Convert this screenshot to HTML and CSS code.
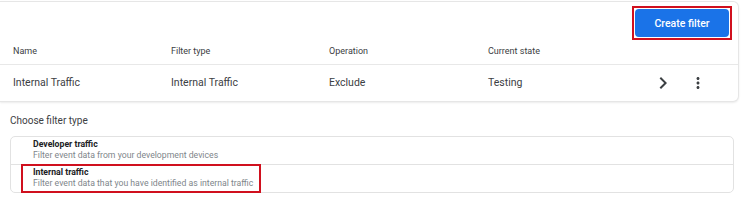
FILE: index.html
```html
<!DOCTYPE html>
<html lang="en">
  <head>
    <meta charset="UTF-8" />
    <meta name="viewport" content="width=device-width, initial-scale=1.0" />
    <title>Data filters</title>
    <link rel="stylesheet" href="styles.css">
  </head>
  <body>
    <div class="filters-card">
      <div class="toolbar">
        <span class="callout">
          <button class="create-btn">Create filter</button>
        </span>
      </div>

      <div class="table-row table-head">
        <div>Name</div>
        <div>Filter type</div>
        <div>Operation</div>
        <div>Current state</div>
      </div>

      <div class="table-row">
        <div>Internal Traffic</div>
        <div>Internal Traffic</div>
        <div>Exclude</div>
        <div>Testing</div>
        <div class="actions">
          <svg class="icon-chevron" viewBox="0 0 24 24" width="24" height="24">
            <path d="M10 6L8.59 7.41 13.17 12l-4.58 4.59L10 18l6-6z" />
          </svg>
          <svg class="icon-more" viewBox="0 0 24 24" width="18" height="18">
            <path d="M12 8c1.1 0 2-.9 2-2s-.9-2-2-2-2 .9-2 2 .9 2 2 2zm0 2c-1.1 0-2 .9-2 2s.9 2 2 2 2-.9 2-2-.9-2-2-2zm0 6c-1.1 0-2 .9-2 2s.9 2 2 2 2-.9 2-2-.9-2-2-2z" />
          </svg>
        </div>
      </div>
    </div>

    <div class="type-section">
      <p class="type-label">Choose filter type</p>

      <div class="type-list">
        <div class="type-item">
          <div class="type-title">Developer traffic</div>
          <div class="type-desc">Filter event data from your development devices</div>
        </div>
        <div class="type-item">
          <div class="type-title">Internal traffic</div>
          <div class="type-desc">Filter event data that you have identified as internal traffic</div>
          <!-- annotation box drawn over the item -->
          <span class="highlight"></span>
        </div>
      </div>
    </div>
  </body>
</html>
```

FILE: styles.css
```css
body {
  margin: 0;
  font-family: Roboto, "Noto Sans", Arial, sans-serif;
  background-color: #fff;
  color: #3c4043;
}

.filters-card {
  margin: 1px 3px 0 0;
  border: 1px solid #e6e6e6;
  border-left: none;
  border-radius: 0 6px 6px 0;
  box-shadow: 0 1px 2px rgba(0, 0, 0, 0.08);
  background: white;
}

.toolbar {
  display: flex;
  justify-content: flex-end;
  padding: 4px 6px 0 0;
}

/* red annotation frame round the button */
.callout {
  display: block;
  padding: 1px;
  border: 2px solid #d0101e;
}

.create-btn {
  display: block;
  height: 28px;
  width: 94px;
  padding: 0;
  border: none;
  border-radius: 4px;
  background: #1a73e8;
  color: white;
  font-family: inherit;
  font-size: 10.5px;
  font-weight: 500;
  cursor: pointer;
}

.table-row {
  display: grid;
  grid-template-columns: 158px 158px 159px 1fr auto;
  align-items: center;
  padding: 0 31px 0 13px;
  height: 36px;
  font-size: 10.5px;
  line-height: 14px;
}

.table-head {
  height: 25px;
  padding-bottom: 2px;
  font-size: 9px;
  line-height: 12px;
  color: #3c4043;
  border-bottom: 1px solid #e8e8e8;
  box-sizing: border-box;
}

.actions {
  display: flex;
  align-items: center;
  gap: 14px;
}

.actions svg {
  fill: #3c4043;
  display: block;
}

.type-section {
  padding: 12px 8px 0 10px;
}

.type-label {
  margin: 0 0 8px;
  font-size: 10px;
  line-height: 14px;
  color: #3c4043;
}

.type-list {
  border: 1px solid #e2e2e2;
  border-radius: 5px;
}

.type-item {
  position: relative;
  height: 27px;
  padding: 2px 0 0 22px;
  box-sizing: border-box;
  font-size: 8.7px;
  line-height: 11px;
}

.type-item + .type-item {
  border-top: 1px solid #e2e2e2;
  height: 28px;
  padding-top: 2px;
}

.type-title {
  font-weight: 700;
  color: #202124;
}

.type-desc {
  color: #80868b;
}

.highlight {
  position: absolute;
  top: -1px;
  left: 10px;
  width: 240px;
  height: 29px;
  border: 2px solid #d0101e;
  box-sizing: border-box;
}
```
